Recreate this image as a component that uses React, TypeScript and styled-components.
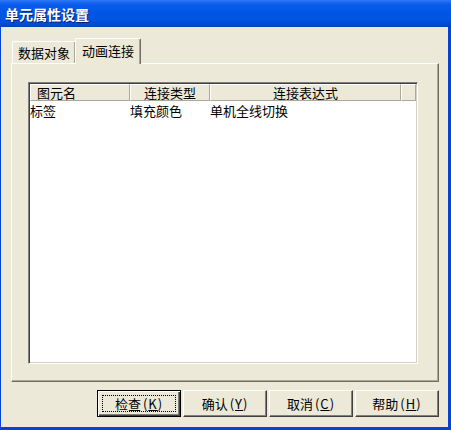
import React from "react";
import styled, { createGlobalStyle } from "styled-components";

const Global = createGlobalStyle`
  html, body { margin: 0; padding: 0; background: #ECE9D8; }
  body { font-family: "Noto Sans CJK SC", "DejaVu Sans", sans-serif; font-size: 13px; color: #000; }
`;

const Window = styled.div`
  width: 451px;
  height: 430px;
  display: flex;
  flex-direction: column;
  overflow: hidden;
`;

const TitleBar = styled.div`
  height: 27px;
  flex: none;
  display: flex;
  align-items: center;
  padding-left: 5px;
  box-sizing: border-box;
  background: linear-gradient(
    to bottom,
    #2E7CF5 0px,
    #1C6AF2 2px,
    #0A5CEB 5px,
    #0057E5 12px,
    #0054E0 20px,
    #0049CF 25px,
    #003DB8 27px
  );
`;

const Title = styled.span`
  color: #fff;
  font-weight: bold;
  font-size: 14px;
  text-shadow: 1px 1px 0 #0A1E6E;
  line-height: 1;
`;

const Frame = styled.div`
  flex: 1;
  display: flex;
  flex-direction: column;
  background: #ECE9D8;
  border-left: 1px solid #0842D4;
  border-right: 3px solid #0842D4;
  border-bottom: 3px solid #0842D4;
  padding: 11px 9px 10px 10px;
  box-sizing: border-box;
`;

const TabStrip = styled.div`
  height: 25px;
  display: flex;
  align-items: flex-end;
  padding-left: 1px;
  position: relative;
  z-index: 1;
`;

const Tab = styled.div<{ $active?: boolean }>`
  box-sizing: border-box;
  height: ${(p) => (p.$active ? 26 : 22)}px;
  margin-bottom: ${(p) => (p.$active ? -1 : 0)}px;
  margin-left: ${(p) => (p.$active ? -1 : 0)}px;
  padding: 0 ${(p) => (p.$active ? 6 : 5)}px;
  display: flex;
  align-items: center;
  justify-content: center;
  background: #ECE9D8;
  border-top: 1px solid #fff;
  border-left: 1px solid #fff;
  border-right: 1px solid #716F64;
  box-shadow: inset -1px 0 0 #ACA899;
  border-radius: 2px 2px 0 0;
  font-size: 13px;
  padding-bottom: ${(p) => (p.$active ? 3 : 0)}px;
`;

const Panel = styled.div`
  height: 319px;
  box-sizing: border-box;
  border-top: 1px solid #fff;
  border-left: 1px solid #fff;
  border-right: 1px solid #716F64;
  border-bottom: 1px solid #716F64;
  box-shadow: inset -1px -1px 0 #ACA899;
  padding: 18px 20px 17px 16px;
  display: flex;
`;

const List = styled.div`
  flex: 1;
  display: flex;
  flex-direction: column;
  background: #fff;
  border: 1px solid;
  border-color: #808080 #fff #fff #808080;
  box-shadow: inset 1px 1px 0 #404040, inset -1px -1px 0 #D4D0C8;
  padding: 1px;
`;

const HeaderRow = styled.div`
  display: flex;
  height: 17px;
  flex: none;
`;

const HeaderCell = styled.div<{ $w?: number; $align?: string }>`
  box-sizing: border-box;
  ${(p) => (p.$w ? `width: ${p.$w}px; flex: none;` : "flex: 1;")}
  height: 17px;
  background: #ECE9D8;
  border-top: 1px solid #fff;
  border-left: 1px solid #fff;
  border-right: 1px solid #ACA899;
  border-bottom: 1px solid #ACA899;
  display: flex;
  align-items: center;
  justify-content: ${(p) => p.$align || "center"};
  padding-left: ${(p) => (p.$align === "flex-start" ? 6 : 0)}px;
  font-size: 13px;
  line-height: 1;
`;

const Row = styled.div`
  display: flex;
  height: 18px;
  align-items: center;
`;

const Cell = styled.div<{ $w?: number }>`
  ${(p) => (p.$w ? `width: ${p.$w}px; flex: none;` : "flex: 1;")}
  font-size: 13px;
  white-space: nowrap;
`;

const ButtonRow = styled.div`
  display: flex;
  justify-content: flex-end;
  gap: 2px;
  margin-top: 8px;
`;

const Button = styled.button<{ $default?: boolean }>`
  width: 84px;
  height: 27px;
  box-sizing: border-box;
  position: relative;
  background: #ECE9D8;
  font-family: "Noto Sans CJK SC", "DejaVu Sans", sans-serif;
  font-size: 13px;
  color: #000;
  padding: 0;
  border: 1px solid;
  border-color: ${(p) => (p.$default ? "#000" : "#fff #404040 #404040 #fff")};
  box-shadow: ${(p) =>
    p.$default
      ? "inset 1px 1px 0 #fff, inset -1px -1px 0 #404040, inset -2px -2px 0 #808080"
      : "inset -1px -1px 0 #808080"};
  display: flex;
  align-items: center;
  justify-content: center;
`;

const Focus = styled.span`
  position: absolute;
  left: 4px;
  top: 4px;
  right: 4px;
  bottom: 4px;
  border: 1px dotted #000;
`;

const Label = styled.span`
  position: relative;
`;

const Key = styled.span`
  margin-left: 2px;
  letter-spacing: 1px;
`;

export default function App() {
  const buttons = [
    { t: "检查", k: "K", d: true },
    { t: "确认", k: "Y" },
    { t: "取消", k: "C" },
    { t: "帮助", k: "H" },
  ];
  return (
    <>
      <Global />
      <Window>
        <TitleBar>
          <Title>单元属性设置</Title>
        </TitleBar>
        <Frame>
          <TabStrip>
            <Tab>数据对象</Tab>
            <Tab $active>动画连接</Tab>
          </TabStrip>
          <Panel>
            <List>
              <HeaderRow>
                <HeaderCell $w={100} $align="flex-start">图元名</HeaderCell>
                <HeaderCell $w={80}>连接类型</HeaderCell>
                <HeaderCell $w={191}>连接表达式</HeaderCell>
                <HeaderCell />
              </HeaderRow>
              <Row>
                <Cell $w={100}>标签</Cell>
                <Cell $w={80}>填充颜色</Cell>
                <Cell>单机全线切换</Cell>
              </Row>
            </List>
          </Panel>
          <ButtonRow>
            {buttons.map((b) => (
              <Button key={b.k} $default={b.d}>
                {b.d && <Focus />}
                <Label>
                  {b.t}
                  <Key>
                    (<u>{b.k}</u>)
                  </Key>
                </Label>
              </Button>
            ))}
          </ButtonRow>
        </Frame>
      </Window>
    </>
  );
}
